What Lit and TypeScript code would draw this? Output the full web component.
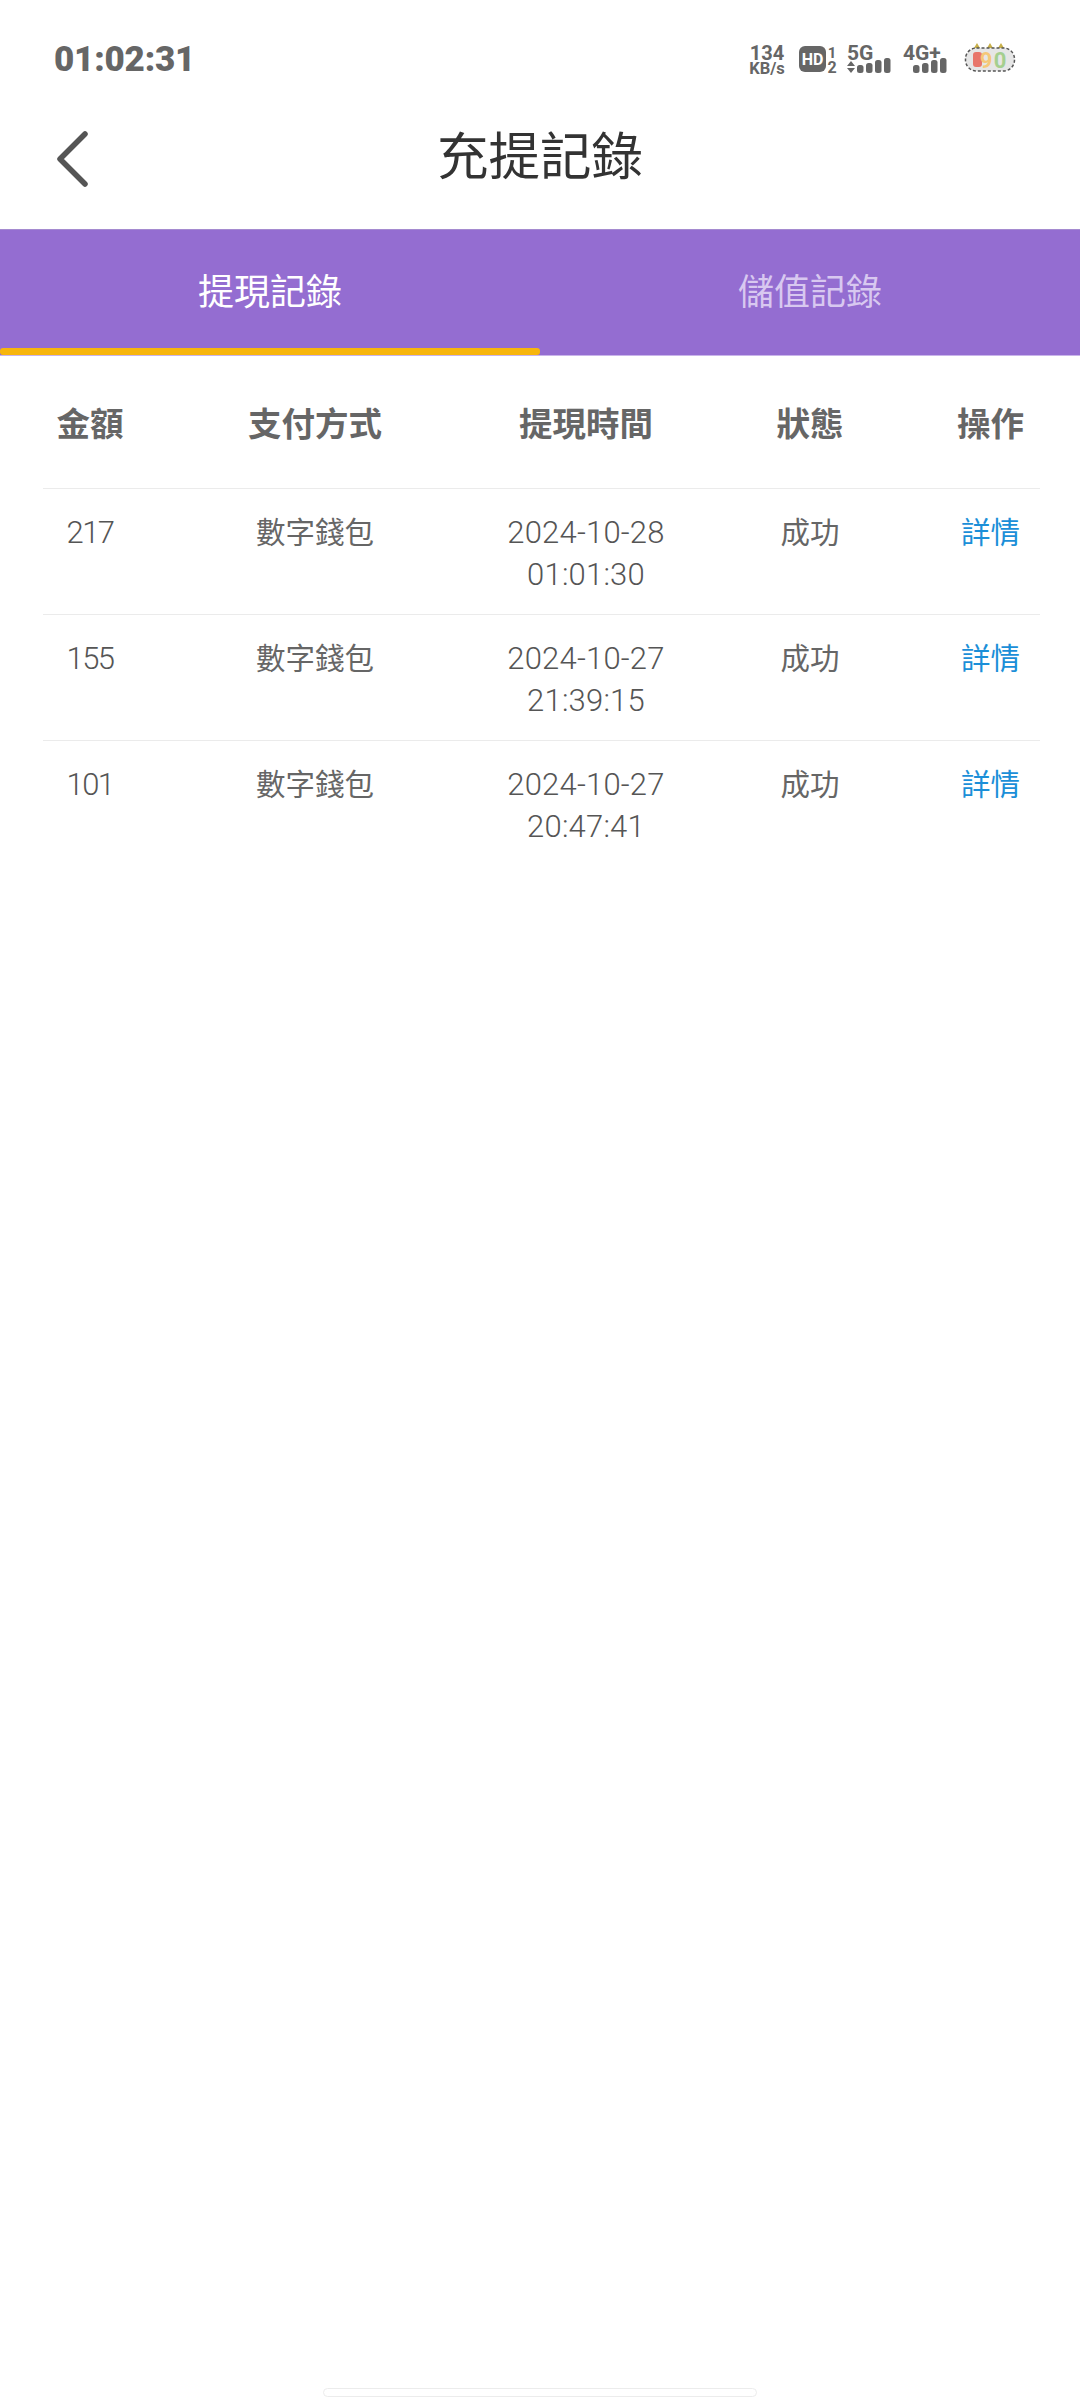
import { LitElement, html, css, svg } from 'lit';
import { customElement, state } from 'lit/decorators.js';

const rows = [
  { amount: '217', method: '數字錢包', date: '2024-10-28', time: '01:01:30', status: '成功' },
  { amount: '155', method: '數字錢包', date: '2024-10-27', time: '21:39:15', status: '成功' },
  { amount: '101', method: '數字錢包', date: '2024-10-27', time: '20:47:41', status: '成功' },
];

const bars = (x: number) => svg`
  <rect x=${x} y="7" width="6.5" height="8" rx="2.5" />
  <rect x=${x + 9} y="5" width="6.5" height="10" rx="2.5" />
  <rect x=${x + 18} y="2" width="6.5" height="13" rx="2.5" />
  <rect x=${x + 27} y="0" width="6.5" height="15" rx="2.5" />
`;

@customElement('app-root')
export class AppRoot extends LitElement {
  @state() tab = 0;

  static styles = css`
    :host {
      display: flex;
      flex-direction: column;
      min-height: 2400px;
      background: #fff;
      font-family: 'Noto Sans CJK TC', Roboto, sans-serif;
      color: #666;
    }
    .status {
      height: 100px;
      box-sizing: border-box;
      padding: 0 64px 0 54px;
      display: flex;
      align-items: flex-start;
      justify-content: space-between;
    }
    .clock {
      font: 900 35px/41px Roboto, sans-serif;
      margin-top: 39px;
      letter-spacing: -0.2px;
      color: #666;
    }
    .icons {
      margin-top: 36px;
      display: flex;
      align-items: flex-start;
      fill: #666;
    }
    .icons svg {
      display: block;
    }
    .icons text {
      font-family: Roboto, sans-serif;
      font-weight: 700;
    }
    .header {
      height: 129px;
      position: relative;
      display: flex;
      justify-content: center;
    }
    .title {
      font-size: 51.5px;
      line-height: 72px;
      margin-top: 17px;
      color: #333;
    }
    .back {
      position: absolute;
      left: 55px;
      top: 30px;
    }
    .tabs {
      display: flex;
      height: 127px;
      background: #946dd1;
      border-top: 1px solid #a58bd0;
      border-bottom: 1px solid #c9b4ea;
      box-sizing: border-box;
    }
    .tab {
      flex: 1;
      position: relative;
      font-size: 36px;
      line-height: 52px;
      padding-top: 33px;
      text-align: center;
      color: #d8c8f0;
      box-sizing: border-box;
    }
    .tab.on {
      color: #fff;
    }
    .tab.on::after {
      content: '';
      position: absolute;
      left: 0;
      right: 0;
      bottom: 0;
      height: 7px;
      background: #f7b50c;
      border-radius: 3px;
    }
    .table {
      margin: 0 40px 0 43px;
    }
    .row {
      display: grid;
      grid-template-columns: 94px 356px 186px 262px 99px;
      text-align: center;
    }
    .head {
      height: 132px;
      align-items: center;
      font-size: 33.5px;
      font-weight: 700;
      line-height: 46px;
      padding-bottom: 1px;
      box-sizing: border-box;
    }
    .item {
      height: 126px;
      box-sizing: border-box;
      border-top: 1px solid #ebebeb;
      padding-top: 23px;
      font-size: 29.5px;
      line-height: 42px;
    }
    .cjk {
      margin-top: -3px;
    }
    .num {
      font-family: Roboto, sans-serif;
      font-size: 31px;
      font-weight: 300;
      letter-spacing: 0.2px;
      color: #555;
    }
    .amount {
      letter-spacing: -1.5px;
    }
    .link {
      color: #1b8fd8;
    }
    .home {
      margin: auto 323px 3px;
      height: 9px;
      border: 1.5px solid #ececec;
      border-radius: 6px;
      box-sizing: border-box;
      background: #fff;
    }
  `;

  renderIcons() {
    return html`<div class="icons">
      <svg width="42" height="44" viewBox="0 -6 42 44">
        <text x="21" y="18" font-size="20" text-anchor="middle">134</text>
        <text x="21" y="32" font-size="16.5" text-anchor="middle">KB/s</text>
      </svg>
      <svg width="40" height="44" viewBox="0 -6 40 44" style="margin-left:11px">
        <rect x="0" y="4" width="27" height="26" rx="6" />
        <text x="13.5" y="23" font-size="16" text-anchor="middle" fill="#fff">HD</text>
        <text x="33" y="16" font-size="15" text-anchor="middle">1</text>
        <text x="33" y="31" font-size="16" text-anchor="middle">2</text>
      </svg>
      <svg width="44" height="44" viewBox="0 -6 44 44" style="margin-left:8px">
        <text x="0" y="18" font-size="21">5G</text>
        <path d="M4 19l4 5H0zM0 26h8l-4 5z" />
        <g transform="translate(0 16)">${bars(10)}</g>
      </svg>
      <svg width="46" height="44" viewBox="0 -6 46 44" style="margin-left:12px">
        <text x="0" y="18" font-size="21">4G+</text>
        <g transform="translate(0 16)">${bars(10)}</g>
      </svg>
      <svg width="52" height="44" viewBox="0 -6 52 44" style="margin-left:15px">
        <path d="M10 6l3-5 3 5zM23 6l3-5 3 5zM34 6l3-5 3 5z" fill="#c8b04a" />
        <rect x="1.5" y="6" width="49" height="23" rx="11" fill="#e6e6e6" stroke="#555" stroke-width="1.5" stroke-dasharray="3 2" />
        <rect x="9" y="10" width="9" height="15" rx="3" fill="#e8756a" />
        <text x="22" y="26" font-size="22" fill="#f5c878" text-anchor="middle">9</text>
        <text x="36" y="26" font-size="22" fill="#a5cf8f" text-anchor="middle">0</text>
      </svg>
    </div>`;
  }

  render() {
    return html`
      <div class="status">
        <div class="clock">01:02:31</div>
        ${this.renderIcons()}
      </div>
      <div class="header">
        <svg class="back" width="34" height="58" viewBox="0 0 34 58" fill="none" stroke="#555" stroke-width="5.5" stroke-linecap="round" stroke-linejoin="round">
          <path d="M30 4L5 29l25 25" />
        </svg>
        <div class="title">充提記錄</div>
      </div>
      <div class="tabs">
        <div class="tab on">提現記錄</div>
        <div class="tab">儲值記錄</div>
      </div>
      <div class="table">
        <div class="row head">
          <div>金額</div><div>支付方式</div><div>提現時間</div><div>狀態</div><div>操作</div>
        </div>
        ${rows.map(
          (r) => html`<div class="row item">
            <div class="num amount">${r.amount}</div>
            <div class="cjk">${r.method}</div>
            <div class="num"><div>${r.date}</div><div>${r.time}</div></div>
            <div class="cjk">${r.status}</div>
            <div class="cjk link">詳情</div>
          </div>`,
        )}
      </div>
      <div class="home"></div>
    `;
  }
}
